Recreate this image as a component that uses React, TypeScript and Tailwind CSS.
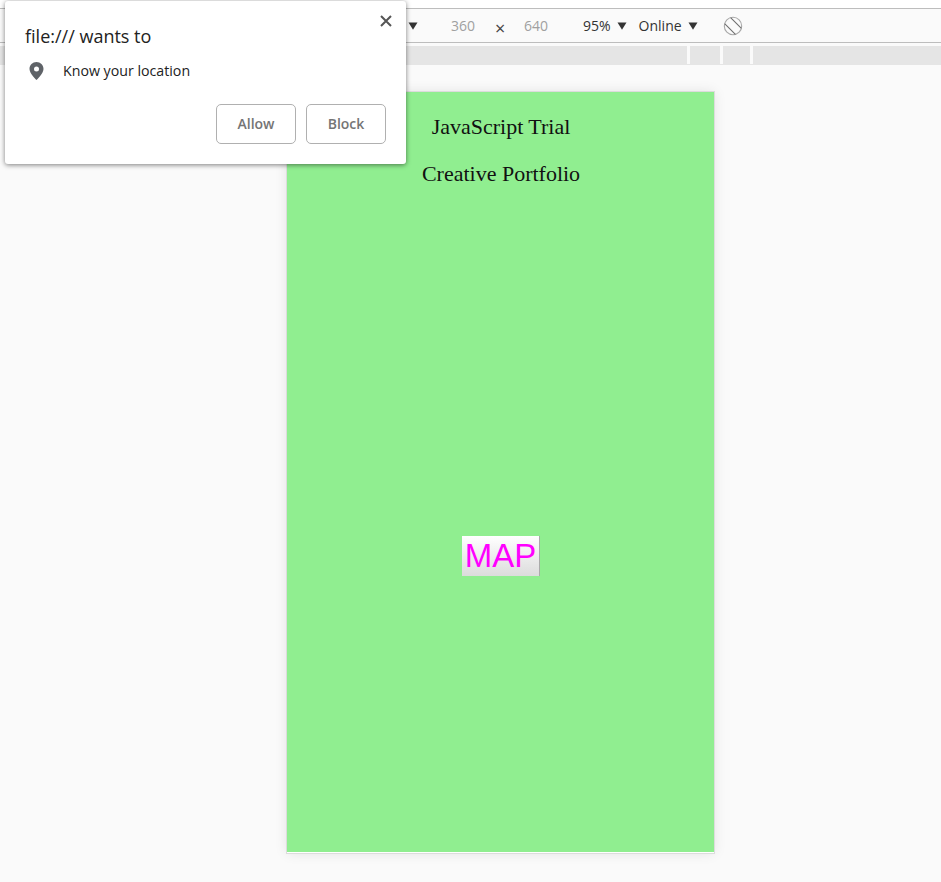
import { useState } from "react";

const Caret = ({ className }: { className: string }) => (
  <svg width="10" height="8" viewBox="0 0 10 8" className={className}>
    <path d="M0.5 0.5h9L5 7.8z" fill="#333" />
  </svg>
);

const RotateIcon = () => (
  <svg width="20" height="20" viewBox="0 0 20 20" fill="none" strokeWidth="1.1">
    <circle cx="10" cy="10" r="8.700" stroke="#a8a8a8" />
    <path d="M7.600 1.600 18.400 12.400M1.600 7.600 12.400 18.400" stroke="#707070" />
  </svg>
);

const Toolbar = () => (
  <div className="flex h-[35px] items-center border-y border-[#bdbdbd] bg-[#fafafa] text-sm text-[#333]">
    <Caret className="ml-[408px] mr-[33px]" />
    <span className="w-[25px] text-[#a0a0a0]">360</span>
    <span className="ml-[19px] mt-[4px] w-[9px] text-[18px] leading-none text-[#444]">×</span>
    <span className="ml-[20px] w-[25px] text-[#a0a0a0]">640</span>
    <span className="ml-[34px]">95%</span>
    <Caret className="ml-[6px]" />
    <span className="ml-[12px]">Online</span>
    <Caret className="ml-[6px]" />
    <span className="ml-[25px] flex">
      <RotateIcon />
    </span>
  </div>
);

const Ruler = () => (
  <div className="mt-[3px] flex h-[19px] items-start bg-[#e5e5e5]">
    <div className="ml-[687px] h-[18px] w-[3px] bg-[#fafafa]" />
    <div className="ml-[30px] h-[18px] w-[3px] bg-[#fafafa]" />
    <div className="ml-[27px] h-[18px] w-[3px] bg-[#fafafa]" />
  </div>
);

const PermissionPopup = ({ onClose }: { onClose: () => void }) => (
  <div className="absolute left-[5px] top-[1px] h-[163px] w-[401px] rounded-[3px] bg-white shadow-[0_1px_5px_rgba(0,0,0,0.5)]">
    <button onClick={onClose} className="absolute right-[13px] top-[13px] flex">
      <svg width="14" height="14" viewBox="0 0 14 14" stroke="#555" strokeWidth="2">
        <path d="M2 2l10 10M12 2 2 12" />
      </svg>
    </button>
    <div className="pl-[20px] pt-[23px] text-[18px] leading-[24px] text-[#222]">file:/// wants to</div>
    <div className="mt-[13px] flex items-center pl-[23px]">
      <svg width="17" height="20" viewBox="0 0 17 20">
        <path
          fillRule="evenodd"
          fill="#5f6368"
          d="M8.5 1C4.6 1 1.5 4.1 1.5 8c0 4.8 7 11 7 11s7-6.200 7-11c0-3.900-3.100-7-7-7zm0 9.500A2.500 2.500 0 1 1 8.500 5.500a2.500 2.500 0 0 1 0 5z"
        />
      </svg>
      <span className="ml-[18px] text-[14.2px] leading-[20px] text-[#222]">Know your location</span>
    </div>
    <div className="mt-[23px] flex justify-end gap-[10px] pr-[20px]">
      <button className="h-[40px] w-[80px] rounded-[5px] border border-[#b0b0b0] text-sm font-semibold text-[#757575]">
        Allow
      </button>
      <button className="h-[40px] w-[80px] rounded-[5px] border border-[#b0b0b0] text-sm font-semibold text-[#757575]">
        Block
      </button>
    </div>
  </div>
);

const Device = () => (
  <div className="ml-[287px] mt-[27px] flex h-[761px] w-[427px] flex-col items-center border-b border-white bg-[#90ee90] font-['Liberation_Serif',serif] text-[22px] leading-[24px] text-[#111] shadow-[0_0_12px_rgba(0,0,0,0.1)] outline outline-[#dcdcdc]">
    <p className="mt-[23px] pl-[1px]">JavaScript Trial</p>
    <p className="mt-[23px] pl-[1px]">Creative Portfolio</p>
    <button className="mt-[350px] h-[40px] w-[78px] border-r border-[#aaa] bg-gradient-to-b from-white to-[#dcdcdc] pl-[1px] font-['Liberation_Sans',sans-serif] text-[33px] leading-[40px] text-[#ff00ff]">
      MAP
    </button>
  </div>
);

export default function App() {
  const [showPopup, setShowPopup] = useState(true);

  return (
    <div className="relative h-[882px] w-[941px] overflow-hidden bg-[#fafafa] font-['Open_Sans',sans-serif]">
      <div className="h-[8px] bg-white" />
      <Toolbar />
      <Ruler />
      <Device />
      {showPopup && <PermissionPopup onClose={() => setShowPopup(false)} />}
    </div>
  );
}
